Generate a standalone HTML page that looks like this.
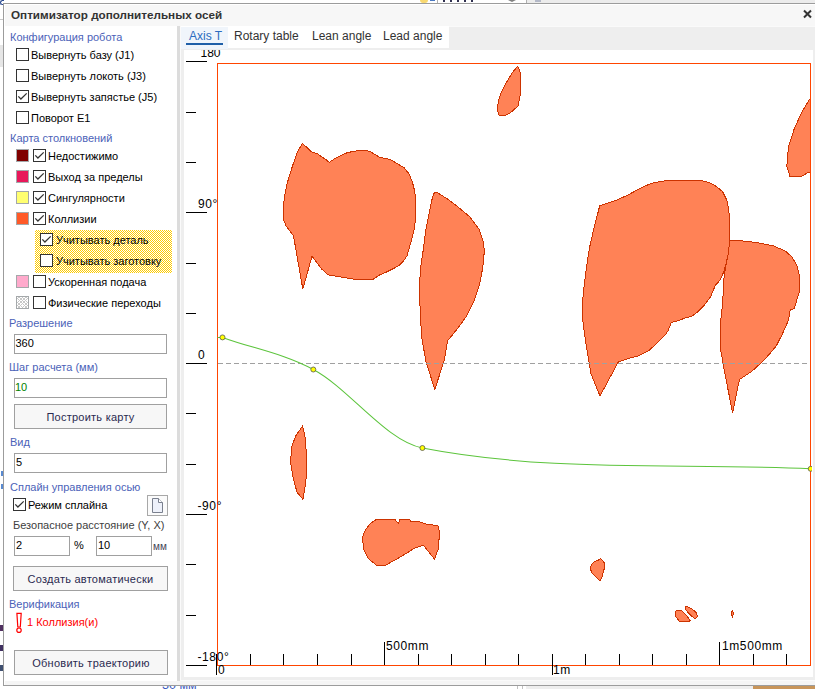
<!DOCTYPE html>
<html><head><meta charset="utf-8">
<style>
*{margin:0;padding:0;box-sizing:border-box}
body{width:815px;height:689px;position:relative;overflow:hidden;background:#fff;font-family:"Liberation Sans",sans-serif;font-size:11px;color:#000}
.a{position:absolute}
.t{position:absolute;white-space:nowrap;line-height:13px}
.hd{color:#4b62b8}
.cb{position:absolute;width:13px;height:13px;border:1px solid #333;background:#fff}
.sw{position:absolute;width:13px;height:13px;border:1px solid #a4a8aa}
.inp{position:absolute;border:1px solid #a0a0a0;background:#fff;height:20px}
.btn{position:absolute;border:1px solid #a0a0a0;background:#f7f7f7;text-align:center;color:#2a2a50;padding-top:1px;letter-spacing:0.25px}
</style></head><body>
<!-- background app bits -->
<div class="a" style="left:0;top:19px;width:3px;height:1px;background:#c8c8c8"></div>
<div class="a" style="left:0;top:45px;width:3px;height:22px;background:#e6e6e6"></div>
<div class="a" style="left:526px;top:0;width:289px;height:3px;background:#ececec"></div>
<div class="a" style="left:526px;top:0;width:1px;height:3px;background:#b0b0b0"></div>
<div class="a" style="left:437px;top:0;width:1px;height:3px;background:#b0b0b0"></div>
<div class="a" style="left:420px;top:0;width:8px;height:3px;background:#f8d870;border-radius:0 0 4px 4px"></div>
<div class="a" style="left:430px;top:0;width:5px;height:1px;background:#4a78c0"></div>
<div class="a" style="left:443px;top:0;width:35px;height:2px;background:repeating-linear-gradient(90deg,#303050 0 2px,transparent 2px 7px)"></div>
<div class="a" style="left:508px;top:0;width:8px;height:2px;background:#808080;clip-path:polygon(0 0,100% 0,50% 100%)"></div>
<div class="a" style="left:535px;top:0;width:6px;height:2px;background:#9098b0;opacity:.6"></div>
<div class="a" style="left:0;top:0;width:4px;height:5px;border:1px solid #2a4a90;border-right:none;border-radius:3px 0 0 3px"></div>
<div class="a" style="left:1px;top:471px;width:2px;height:5px;background:#5a8ad0"></div>
<div class="a" style="left:1px;top:484px;width:2px;height:5px;background:#5a8ad0"></div>
<div class="a" style="left:0;top:625px;width:3px;height:6px;background:#503060"></div>
<div class="a" style="left:0;top:645px;width:3px;height:6px;background:#403060"></div>
<div class="a" style="left:0;top:665px;width:3px;height:6px;background:#405070"></div>
<div class="t" style="left:162px;top:679px;color:#3a5ac0;font-size:12.5px">30 мм</div>
<div class="a" style="left:517px;top:686px;width:1px;height:3px;background:#c0c0c0"></div>
<div class="a" style="left:522px;top:686px;width:1px;height:3px;background:#c0c0c0"></div>
<div class="a" style="left:753px;top:686px;width:62px;height:3px;background:#c8955a"></div>
<div class="a" style="left:526px;top:686px;width:227px;height:3px;background:#eeeeee"></div>

<!-- dialog frame -->
<div class="a" style="left:3px;top:3px;width:840px;height:683px;border:1px solid #9c9c9c;background:#fff"></div>
<div class="a" style="left:5px;top:5px;width:815px;height:21px;background:#f7f7f7"></div>
<div class="t" style="left:11px;top:8px;font-weight:bold;color:#333;font-size:11.7px">Оптимизатор дополнительных осей</div>
<svg class="a" style="left:800px;top:7px" width="15" height="15"><path d="M4,3.5 L11,10.5 M11,3.5 L4,10.5" stroke="#333" stroke-width="2"/></svg>
<div class="a" style="left:5px;top:681px;width:815px;height:4px;background:#f5f5f5"></div>

<!-- left panel -->
<div class="t hd" style="left:10px;top:31px">Конфигурация робота</div>
<div class="cb" style="left:16px;top:48px"></div><div class="t" style="left:31px;top:49px">Вывернуть базу (J1)</div>
<div class="cb" style="left:16px;top:69px"></div><div class="t" style="left:31px;top:70px">Вывернуть локоть (J3)</div>
<div class="cb" style="left:16px;top:90px"><svg width="13" height="13" style="position:absolute;left:-1px;top:-1px"><path d="M2.3,6.4 L4.9,9 L10.7,3.4" fill="none" stroke="#333" stroke-width="1.3"/></svg></div><div class="t" style="left:31px;top:91px">Вывернуть запястье (J5)</div>
<div class="cb" style="left:16px;top:111px"></div><div class="t" style="left:31px;top:112px">Поворот E1</div>

<div class="t hd" style="left:10px;top:132px">Карта столкновений</div>
<div class="sw" style="left:16px;top:149px;background:#800000"></div><div class="cb" style="left:33px;top:149px"><svg width="13" height="13" style="position:absolute;left:-1px;top:-1px"><path d="M2.3,6.4 L4.9,9 L10.7,3.4" fill="none" stroke="#333" stroke-width="1.3"/></svg></div><div class="t" style="left:48px;top:150px">Недостижимо</div>
<div class="sw" style="left:16px;top:170px;background:#e8185a"></div><div class="cb" style="left:33px;top:170px"><svg width="13" height="13" style="position:absolute;left:-1px;top:-1px"><path d="M2.3,6.4 L4.9,9 L10.7,3.4" fill="none" stroke="#333" stroke-width="1.3"/></svg></div><div class="t" style="left:48px;top:171px">Выход за пределы</div>
<div class="sw" style="left:16px;top:191px;background:#ffff70"></div><div class="cb" style="left:33px;top:191px"><svg width="13" height="13" style="position:absolute;left:-1px;top:-1px"><path d="M2.3,6.4 L4.9,9 L10.7,3.4" fill="none" stroke="#333" stroke-width="1.3"/></svg></div><div class="t" style="left:48px;top:192px">Сингулярности</div>
<div class="sw" style="left:16px;top:212px;background:#ff5a28"></div><div class="cb" style="left:33px;top:212px"><svg width="13" height="13" style="position:absolute;left:-1px;top:-1px"><path d="M2.3,6.4 L4.9,9 L10.7,3.4" fill="none" stroke="#333" stroke-width="1.3"/></svg></div><div class="t" style="left:48px;top:213px">Коллизии</div>
<div class="a" style="left:35px;top:230px;width:137px;height:43px;background:repeating-conic-gradient(#ffcc00 0 25%,#ffffff 0 50%) 0 0/2px 2px"></div>
<div class="cb" style="left:40px;top:233px"><svg width="13" height="13" style="position:absolute;left:-1px;top:-1px"><path d="M2.3,6.4 L4.9,9 L10.7,3.4" fill="none" stroke="#333" stroke-width="1.3"/></svg></div><div class="t" style="left:56px;top:234px">Учитывать деталь</div>
<div class="cb" style="left:40px;top:254px"></div><div class="t" style="left:56px;top:255px">Учитывать заготовку</div>
<div class="sw" style="left:16px;top:275px;background:#ffaacc"></div><div class="cb" style="left:33px;top:275px"></div><div class="t" style="left:48px;top:276px">Ускоренная подача</div>
<div class="sw" style="left:16px;top:296px;background:repeating-linear-gradient(45deg,#fff 0 1.6px,#c8c8c8 1.6px 2.4px),#fff"><div style="position:absolute;inset:0;background:repeating-linear-gradient(-45deg,transparent 0 1.6px,#c8c8c8 1.6px 2.4px)"></div></div><div class="cb" style="left:33px;top:296px"></div><div class="t" style="left:48px;top:297px">Физические переходы</div>

<div class="t hd" style="left:9px;top:317px">Разрешение</div>
<div class="inp" style="left:14px;top:334px;width:153px"></div><div class="t" style="left:15.5px;top:337px">360</div>
<div class="t hd" style="left:9px;top:361px">Шаг расчета (мм)</div>
<div class="inp" style="left:14px;top:378px;width:153px"></div><div class="t" style="left:15px;top:381px;color:#008000">10</div>
<div class="btn" style="left:14px;top:404px;width:153px;height:25px;line-height:23px">Построить карту</div>
<div class="t hd" style="left:10px;top:436px">Вид</div>
<div class="inp" style="left:14px;top:453px;width:153px"></div><div class="t" style="left:16px;top:456px">5</div>

<div class="t hd" style="left:10px;top:481px">Сплайн управления осью</div>
<div class="cb" style="left:13px;top:498px"><svg width="13" height="13" style="position:absolute;left:-1px;top:-1px"><path d="M2.3,6.4 L4.9,9 L10.7,3.4" fill="none" stroke="#333" stroke-width="1.3"/></svg></div><div class="t" style="left:28px;top:499px">Режим сплайна</div>
<div class="a" style="left:147px;top:495px;width:21px;height:21px;border:1px solid #a8a8a8;background:#fbfbfb"></div><svg class="a" style="left:0;top:0" width="815" height="689"><path d="M152.5,498.5 H158.5 L162.5,502.5 V512.5 H152.5 Z" fill="#eef1fa" stroke="#7a808e" stroke-width="1"/><path d="M158.5,498.5 V502.5 H162.5" fill="#fff" stroke="#7a808e" stroke-width="1"/></svg>
<div class="t" style="left:13px;top:519px;color:#404040">Безопасное расстояние (Y, X)</div>
<div class="inp" style="left:14px;top:536px;width:56px"></div><div class="t" style="left:16px;top:539px">2</div>
<div class="t" style="left:74px;top:539px">%</div>
<div class="inp" style="left:96px;top:536px;width:56px"></div><div class="t" style="left:98px;top:539px">10</div>
<div class="t" style="left:153px;top:540px;color:#445;font-size:10px">мм</div>
<div class="btn" style="left:13px;top:566px;width:155px;height:25px;line-height:23px">Создать автоматически</div>
<div class="t hd" style="left:9px;top:598px">Верификация</div>
<svg class="a" style="left:0;top:0" width="815" height="689"><path d="M16.9,613.3 H21.2 L20.3,627 H17.8 Z" fill="#fff" stroke="#ff0000" stroke-width="1.2"/><circle cx="19" cy="630.2" r="2.2" fill="#fff" stroke="#ff0000" stroke-width="1.2"/></svg><div class="t" style="left:27px;top:616px;color:#ff0000">1 Коллизия(и)</div>
<div class="btn" style="left:14px;top:650px;width:154px;height:25px;line-height:23px">Обновить траекторию</div>

<!-- divider & right panel -->
<div class="a" style="left:177px;top:26px;width:3px;height:655px;background:#dcdcdc"></div>
<div class="a" style="left:180px;top:26px;width:640px;height:655px;background:#fafafa"></div><div class="a" style="left:181px;top:27px;width:640px;height:653px;background:#eeeeee"></div>
<div class="a" style="left:181px;top:26px;width:268px;height:22px;background:#fff"></div>
<div class="a" style="left:181px;top:27px;width:47px;height:22px;background:#f0f5fb"></div>
<div class="t" style="left:189px;top:30px;color:#2b6cc0;font-size:12px">Axis T</div>
<div class="a" style="left:186px;top:43px;width:37px;height:2px;background:#1f5fa8"></div>
<div class="t" style="left:234px;top:30px;color:#333;font-size:12px">Rotary table</div>
<div class="t" style="left:312px;top:30px;color:#333;font-size:12px">Lean angle</div>
<div class="t" style="left:383px;top:30px;color:#333;font-size:12px">Lead angle</div>
<div class="a" style="left:184px;top:50px;width:629px;height:627px;background:#fff"></div>

<svg class="a" style="left:0;top:0" width="815" height="689" viewBox="0 0 815 689">
<defs><clipPath id="cc"><rect x="184" y="50" width="628" height="627"/></clipPath>
<clipPath id="cr"><rect x="218" y="64" width="592" height="601"/></clipPath></defs>
<g clip-path="url(#cc)">
<g fill="#ff8256" stroke="#cc3300" stroke-width="1" clip-path="url(#cr)" shape-rendering="crispEdges">
<path d="M517.7,66.1 L520.5,73.1 L520.5,93.1 L519.2,100.1 L517.9,106.2 L510.9,112.3 L505.7,115.3 L499.2,115.3 L497.4,109.7 L498.3,101.8 L500.5,94 L504,87 L508.3,79.2 L512.7,72.2Z"/>
<path d="M302.6,143.4 L311.3,151.8 L317.1,153.6 L326.4,160 L329.3,162.3 L334.6,158.8 L345,153.4 L349.6,152.2 L357.2,150.7 L365.9,150.4 L370,151.6 L375.2,154.5 L379.8,157.4 L389.1,159.2 L393.8,161.5 L398.4,164.4 L404.2,167.9 L408.9,173.7 L412.3,181.8 L414.7,191.1 L415.6,200.4 L415.8,215 L414.7,226.6 L412.3,237.1 L409.4,247.5 L407.1,255.6 L403.6,260.9 L399.6,264.9 L393.8,268.4 L386.8,271.9 L378.7,275.4 L372.9,279.4 L361.3,280 L352.5,278.9 L342.9,277.3 L328.1,274.8 L321.9,269.3 L312,256.3 L302.8,289 L293.5,235.9 L286.1,226 L283.6,219.9 L283,210 L284.6,196.5 L287,183.8 L291.6,168.7 L297.4,151.8Z"/>
<path d="M434.5,192.3 L437.9,192.9 L447,198.7 L459.2,207.9 L469.9,217 L479,229.2 L482.8,239.9 L484.4,250.5 L482.8,267.3 L479.5,285 L473.9,301 L465.9,316.9 L457.9,328.1 L447.5,340.9 L444.3,360 L434.8,389.6 L426,361.6 L422,339.3 L420.4,316.9 L419.3,285 L421.1,264.3 L423.4,249 L425.7,230.7 L428.7,215.5 L432.5,197.2Z"/>
<path d="M599.7,205.9 L605.5,203.7 L614.7,200.9 L628.1,195 L639.8,188.4 L651.5,183.3 L665,180.8 L702.6,180.8 L710.1,183 L716.8,186.7 L722.6,191.7 L726.8,200 L728.8,210.1 L729.8,225.1 L729.8,240.1 L728,255 L725.8,265 L723.5,272.5 L720,280.1 L715.4,285.3 L710.7,296.4 L704.9,304.5 L696.8,312.6 L692.2,316.1 L684,318.4 L678.2,320.7 L671.3,322.5 L667.8,331.2 L665,335.1 L656.8,343.4 L648.5,350.9 L638.4,356 L628.4,358.5 L618.4,361.8 L600,396 L590.9,373.5 L585.9,343.4 L582.5,318.4 L582.5,301.7 L584.2,285 L586.3,268.5 L589.7,246.8 L593.9,228.4Z"/>
<path d="M729.8,240 L742.5,240.9 L755.9,242.5 L765.1,244.2 L773.4,245.9 L785.1,250.9 L791.8,256.7 L796.8,265.1 L799.3,275.1 L799.3,291.8 L796.8,300.1 L794.3,308.5 L790.1,310.1 L788.5,320.1 L782.6,333.5 L776.8,345 L772.7,350.4 L763.4,360.9 L751.8,371.3 L739.6,379.5 L738.4,384.1 L732.6,412.6 L725.1,374.8 L721,351.6 L720.2,340 L720.8,320 L722.5,305.1 L724.2,275.1 L725.5,268 L728,255Z"/>
<path d="M812,96 L810.2,98.4 L801.9,111.9 L794,129.5 L788.4,147 L786.8,166.2 L790,176.5 L800.3,177 L806.7,173.3 L812,171Z"/>
<path d="M302.5,426.1 L304.8,434.6 L306.1,450.3 L306.8,473.8 L304.8,488.2 L302.9,499.3 L297,492.1 L293.1,477.7 L290.5,462.1 L291.8,446.4 L295.7,435.9Z"/>
<path d="M376.5,519.4 L394.8,519.4 L398.6,523.8 L399.7,519.4 L409.7,519.4 L410.2,521 L419,521.6 L426.8,524.4 L437.8,525.5 L439.5,532.1 L438.4,548.6 L434.5,559.1 L423.5,545.3 L414.6,548.1 L401.4,556.4 L391.4,561.9 L385.9,565.2 L376.5,565.2 L368.3,558.6 L363.3,548.6 L362.7,536.5 L365.5,529.9 L370.5,523.3Z"/>
<path d="M600.3,558.7 L603.2,561 L604.7,563.9 L604.7,566.8 L603.5,571.5 L602.1,576.7 L600,581.3 L596.8,577.9 L592.5,573.8 L590.7,569.7 L590.7,566.8 L592.5,563.4 L595.1,561.3 L598,560.3Z"/>
<path d="M676.3,610.2 L681.2,610.2 L686.1,615.1 L690.5,621 L679.2,621.3 L675.8,616.6 L675.3,613.7Z"/>
<path d="M685.1,606.3 L687.6,606.6 L691.5,608.7 L695.9,612.2 L697.4,616.1 L695.9,618.4 L694,618.1 L689,613.7 L685.6,609.2Z"/>
<path d="M732.2,610.2 L733.7,613.2 L732.5,616.6 L731.3,613.7Z"/>
</g>
<!-- red frame -->
<rect x="217.5" y="63.5" width="593" height="602" fill="none" stroke="#ff4500" stroke-width="1"/>
<!-- zero dashed -->
<line x1="218" y1="363.5" x2="810" y2="363.5" stroke="#a0a0a0" stroke-width="1" stroke-dasharray="5,3"/>
<!-- y ticks -->
<g stroke="#000" stroke-width="1">
<path d="M186,61.5H207M186,112.5H196M186,162.5H196M186,212.5H207M186,263.5H196M186,313.5H196M186,363.5H207M186,413.5H196M186,464.5H196M186,514.5H207M186,564.5H196M186,615.5H196M186,665.5H207"/>
<path d="M216.5,654V675M250.5,654V665M283.5,654V665M317.5,654V665M351.5,654V665M384.5,642V665M418.5,654V665M451.5,654V665M485.5,654V665M518.5,654V665M552.5,654V675M585.5,654V665M619.5,654V665M652.5,654V665M686.5,654V665M719.5,642V665M753.5,654V665M786.5,654V665"/>
</g>
<g font-family="Liberation Sans" font-size="12" fill="#000" letter-spacing="0.6">
<text x="200.5" y="57" letter-spacing="0">180</text>
<text x="198" y="208">90°</text>
<text x="198" y="359">0</text>
<text x="197.5" y="510">-90°</text>
<text x="197.5" y="661">-180°</text>
<text x="218" y="674">0</text>
<text x="386" y="650">500mm</text>
<text x="553" y="674">1m</text>
<text x="722" y="650">1m500mm</text>
</g>
<!-- spline -->
<path d="M217.5,337.4 L222.5,337.4 C252.8,348.5 283.0,353.2 313.3,369.5 C349.7,389.1 386.0,441.0 422.4,448.0 C551.8,473.0 681.3,462.6 810.7,468.8" fill="none" stroke="#5cc43c" stroke-width="1.05"/>
<g fill="#ffff00" stroke="#555" stroke-width="0.8">
<circle cx="222.5" cy="337.4" r="2.5"/><circle cx="313.3" cy="369.5" r="2.5"/><circle cx="422.4" cy="448" r="2.5"/><circle cx="810.7" cy="468.8" r="2.5"/>
</g>
</g>
</svg>
</body></html>
